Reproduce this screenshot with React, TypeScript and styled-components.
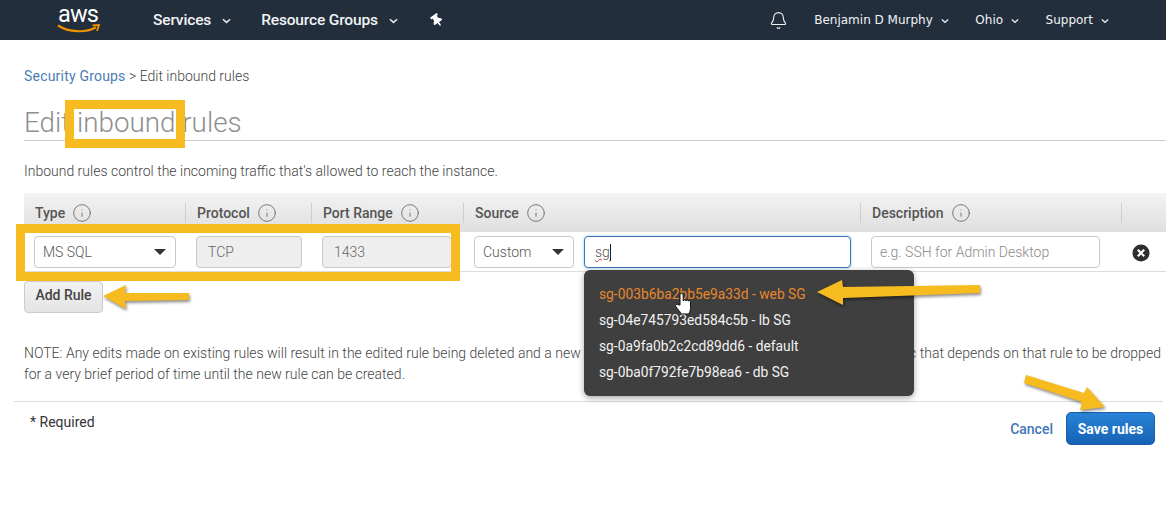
import { Bell, Info } from 'lucide-react'
import { FaThumbtack } from 'react-icons/fa'
import styled, { createGlobalStyle } from 'styled-components'

const Global = createGlobalStyle`
  html, body {
    margin: 0;
    padding: 0;
    background: #fff;
    font-family: Roboto, "Liberation Sans", sans-serif;
    overflow: hidden;
  }
`

function Chevron() {
  return (
    <ChevronSvg viewBox="0 0 10 6" fill="none">
      <path d="M1 1l4 3.6L9 1" stroke="#e6e9ec" strokeWidth="1.7" />
    </ChevronSvg>
  )
}

function Tip() {
  return <Info size={20} strokeWidth={0.9} color="#555" />
}

const options = [
  'sg-003b6ba2bb5e9a33d - web SG',
  'sg-04e745793ed584c5b - lb SG',
  'sg-0a9fa0b2c2cd89dd6 - default',
  'sg-0ba0f792fe7b98ea6 - db SG',
]

function App() {
  return (
    <Page>
      <Global />
      <Nav>
        <Logo>
          <LogoText>aws</LogoText>
          <Smile width="44" height="10" viewBox="0 0 44 10" fill="none">
            <path d="M1 1.5C12 8.5 28 9 39 3.5" stroke="#f29100" strokeWidth="2.2" />
            <path d="M35.500 1.500L42 1l-2 6" stroke="#f29100" strokeWidth="1.800" />
          </Smile>
        </Logo>
        <NavItem>Services<Chevron /></NavItem>
        <NavItem>Resource Groups<Chevron /></NavItem>
        <PinIcon />
        <NavRight>
          <BellIcon size={19} strokeWidth={1.4} color="#eef0f2" />
          <UserItem>Benjamin D Murphy<Chevron /></UserItem>
          <UserItem>Ohio<Chevron /></UserItem>
          <UserItem>Support<Chevron /></UserItem>
        </NavRight>
      </Nav>

      <Main>
        <Crumbs>
          <CrumbLink>Security Groups</CrumbLink> &gt; Edit inbound rules
        </Crumbs>
        <Title>Edit inbound rules</Title>
        <Lead>Inbound rules control the incoming traffic that's allowed to reach the instance.</Lead>

        <HeaderRow>
          <HeadCell $first>Type <Tip /></HeadCell>
          <HeadCell>Protocol <Tip /></HeadCell>
          <HeadCell>Port Range <Tip /></HeadCell>
          <HeadCell>Source <Tip /></HeadCell>
          <HeadCell>Description <Tip /></HeadCell>
          <HeadCell />
        </HeaderRow>

        <RuleRow>
          <Cell $first>
            <Select $width={142}>MS SQL<Caret /></Select>
          </Cell>
          <Cell><ReadOnly>TCP</ReadOnly></Cell>
          <Cell><ReadOnly>1433</ReadOnly></Cell>
          <Cell>
            <Select $width={100}>Custom<Caret /></Select>
            <SourceWrap>
              <SourceInput>
                <Squiggle>sg</Squiggle>
                <TextCaret />
              </SourceInput>
              <Dropdown>
                {options.map((o, i) => (
                  <Option key={o} $active={i === 0}>{o}</Option>
                ))}
              </Dropdown>
            </SourceWrap>
          </Cell>
          <Cell><Placeholder>e.g. SSH for Admin Desktop</Placeholder></Cell>
          <RemoveCell>
            <svg width="18" height="18" viewBox="0 0 18 18">
              <circle cx="9" cy="9" r="8.500" fill="#2f2f2f" />
              <path d="M5.800 5.800l6.400 6.400M12.200 5.800l-6.400 6.400" stroke="#fff" strokeWidth="2.200" />
            </svg>
          </RemoveCell>
        </RuleRow>

        <AddRule>Add Rule</AddRule>

        <Note>
          NOTE: Any edits made on existing rules will result in the edited rule being deleted and a new rule created with the new
          details. This will cause traffic that depends on that rule to be dropped for a very brief period of time until the new rule
          can be created.
        </Note>
      </Main>

      <Footer>
        <Required>* Required</Required>
        <Actions>
          <Cancel>Cancel</Cancel>
          <Save>Save rules</Save>
        </Actions>
      </Footer>

      <Highlight $left={65} $top={100} $w={120} $h={48} />
      <Highlight $left={16} $top={224} $w={444} $h={57} />
      <Overlay viewBox="0 0 1166 526">
        <polygon points="103,296 126,285 125,293 189,293 189,300 125,301 126,309" />
        <polygon points="817,292 842,280 843,287 980,285 980,293 843,298 843,305" />
        <polygon points="1026,375 1084,393 1087,387 1105,407 1080,410 1082,402 1024,383" />
        <path
          d="M680 305V295.500c0-2.800 3.200-2.800 3.200 0v5.500c.3-1.600 2.600-1.600 2.800 0 .3-1.400 2.400-1.400 2.600.2.300-1 1.700-1 1.900.4v6c0 3-.7 4.500-1.800 6.400h-7.300c-1-2-3.500-4.500-5.500-7.300-1.200-1.700 1-3.300 2.700-1.800z"
          fill="#fff"
          stroke="#111"
          strokeWidth="1"
        />
      </Overlay>
    </Page>
  )
}

export default App

const Page = styled.div`
  position: relative;
  width: 1166px;
  height: 526px;
  overflow: hidden;
  background: #fff;
`

const Nav = styled.nav`
  display: flex;
  align-items: center;
  height: 40px;
  padding: 0 57px;
  box-sizing: border-box;
  background: #222e3c;
  color: #f2f3f4;
`

const Logo = styled.div`
  display: flex;
  flex-direction: column;
  width: 96px;
  height: 40px;
`

const Smile = styled.svg`
  display: block;
  margin-top: -4px;
`

const LogoText = styled.span`
  font: 400 23.500px/28px Roboto, sans-serif;
  letter-spacing: -0.8px;
  margin-left: 1px;
  color: #fff;
`

const NavItem = styled.div`
  display: flex;
  align-items: center;
  font-size: 15.500px;
  font-weight: 500;
  letter-spacing: -0.15px;
  margin-right: 30px;
`

const ChevronSvg = styled.svg`
  width: 9px;
  height: 6px;
  margin-left: 11px;
  margin-top: 2px;
`

const PinIcon = styled(FaThumbtack)`
  width: 12px;
  height: 13px;
  color: #fff;
  margin-left: 3px;
  transform: rotate(-35deg);
`

const NavRight = styled.div`
  display: flex;
  align-items: center;
  margin-left: auto;
`

const BellIcon = styled(Bell)`
  margin-right: 26px;
`

const UserItem = styled.div`
  display: flex;
  align-items: center;
  font: 12px "DejaVu Sans", sans-serif;
  margin-right: 26.500px;
  &:last-child {
    margin-right: 0;
  }
  svg {
    margin-left: 8px;
    width: 8px;
  }
`

const Main = styled.main`
  padding: 28px 0 0 24px;
`

const Crumbs = styled.div`
  font-size: 14px;
  font-weight: 300;
  line-height: 17px;
  color: #444;
`

const CrumbLink = styled.a`
  color: #4a7db5;
  font-weight: 400;
  letter-spacing: 0.2px;
`

const Title = styled.h1`
  margin: 19px 0 0;
  height: 36px;
  font-size: 27.800px;
  line-height: 38px;
  font-weight: 300;
  color: #8f8f8f;
  border-bottom: 1px solid #ccc;
`

const Lead = styled.p`
  margin: 22px 0 0;
  font-size: 14px;
  line-height: 17px;
  font-weight: 300;
  color: #444;
`

const columns = '161px 126px 152px 397px 261px 1fr'

const HeaderRow = styled.div`
  display: grid;
  grid-template-columns: ${columns};
  height: 39px;
  margin-top: 13px;
  padding-top: 10px;
  box-sizing: border-box;
  background: linear-gradient(#f3f3f3, #dfdfdf);
`

const HeadCell = styled.div<{ $first?: boolean }>`
  display: flex;
  align-items: center;
  gap: 7px;
  height: 20px;
  padding-left: 11px;
  font-size: 14px;
  font-weight: 500;
  color: #555;
  border-left: ${(p) => (p.$first ? 'none' : '1px solid #cfcfcf')};
`

const RuleRow = styled.div`
  display: grid;
  grid-template-columns: ${columns};
  height: 40px;
  box-sizing: border-box;
  border-bottom: 1px solid #ddd;
  padding-top: 4px;
`

const Cell = styled.div<{ $first?: boolean }>`
  display: flex;
  gap: 10px;
  padding-left: ${(p) => (p.$first ? '10px' : '11px')};
`

const RemoveCell = styled.div`
  display: flex;
  justify-content: flex-end;
  padding: 8px 16px 0 0;
`

const Field = styled.div`
  display: flex;
  align-items: center;
  box-sizing: border-box;
  height: 32px;
  padding: 0 9px 0 8px;
  border: 1px solid #c9c9c9;
  border-radius: 4px;
  font-size: 14px;
  font-weight: 300;
  color: #555;
  background: #fff;
`

const Select = styled(Field)<{ $width: number }>`
  justify-content: space-between;
  width: ${(p) => p.$width}px;
`

const Caret = styled.span`
  width: 0;
  height: 0;
  border-left: 6px solid transparent;
  border-right: 6px solid transparent;
  border-top: 6px solid #333;
`

const ReadOnly = styled(Field)`
  width: 106px;
  padding-left: 11px;
  background: #eee;
  color: #666;
  ${Cell}:nth-child(3) & {
    width: 130px;
  }
`

const SourceWrap = styled.div`
  position: relative;
`

const SourceInput = styled(Field)`
  width: 267px;
  padding-left: 10px;
  border-color: #3b78b5;
  box-shadow: 0 0 3px #9ecaed;
`

const Squiggle = styled.span`
  text-decoration: underline wavy #c0392b 1px;
`

const TextCaret = styled.span`
  width: 1px;
  height: 17px;
  background: #222;
`

const Dropdown = styled.ul`
  position: absolute;
  top: 34px;
  left: 0;
  width: 330px;
  height: 126px;
  box-sizing: border-box;
  margin: 0;
  padding: 11px 15px;
  list-style: none;
  background: #3f3f3f;
  border-radius: 6px;
  box-shadow: 0 2px 6px rgba(0, 0, 0, 0.35);
  z-index: 2;
`

const Option = styled.li<{ $active: boolean }>`
  font-size: 13.800px;
  line-height: 26px;
  color: ${(p) => (p.$active ? '#e8872b' : '#f1f1f1')};
`

const Placeholder = styled(Field)`
  width: 229px;
  color: #8a8a8a;
`

const AddRule = styled.button`
  display: block;
  width: 79px;
  height: 32px;
  margin-top: 9px;
  padding: 0 0 4px;
  border: 1px solid #ccc;
  border-radius: 4px;
  background: linear-gradient(#f2f2f2, #e4e4e4);
  font: 500 14px Roboto, sans-serif;
  color: #444;
`

const Note = styled.p`
  width: 1140px;
  margin: 30px 0 0;
  font-size: 14px;
  font-weight: 300;
  line-height: 21px;
  color: #444;
`

const Footer = styled.footer`
  display: flex;
  justify-content: space-between;
  margin: 0 3px 0 14px;
  padding: 10px 8px 0 16px;
  position: relative;
  top: 16px;
  border-top: 1px solid #ddd;
`

const Required = styled.div`
  font-size: 14px;
  line-height: 20px;
  color: #333;
`

const Actions = styled.div`
  display: flex;
  align-items: center;
  gap: 13px;
`

const Cancel = styled.a`
  font-size: 14px;
  font-weight: 500;
  color: #3f78b8;
`

const Save = styled.button`
  width: 89px;
  height: 33px;
  padding: 0;
  border: 1px solid #1a5ea8;
  border-radius: 5px;
  background: linear-gradient(#2a83d8, #1562b5);
  font: 700 14px Roboto, sans-serif;
  color: #fff;
`

const Highlight = styled.div<{ $left: number; $top: number; $w: number; $h: number }>`
  position: absolute;
  left: ${(p) => p.$left}px;
  top: ${(p) => p.$top}px;
  width: ${(p) => p.$w}px;
  height: ${(p) => p.$h}px;
  box-sizing: border-box;
  border: 9px solid #f6bb1f;
  z-index: 3;
`

const Overlay = styled.svg`
  position: absolute;
  inset: 0;
  width: 1166px;
  height: 526px;
  z-index: 4;
  pointer-events: none;
  polygon {
    fill: #f6bb1f;
    filter: drop-shadow(1px 2px 1.5px rgba(0, 0, 0, 0.45));
  }
`
